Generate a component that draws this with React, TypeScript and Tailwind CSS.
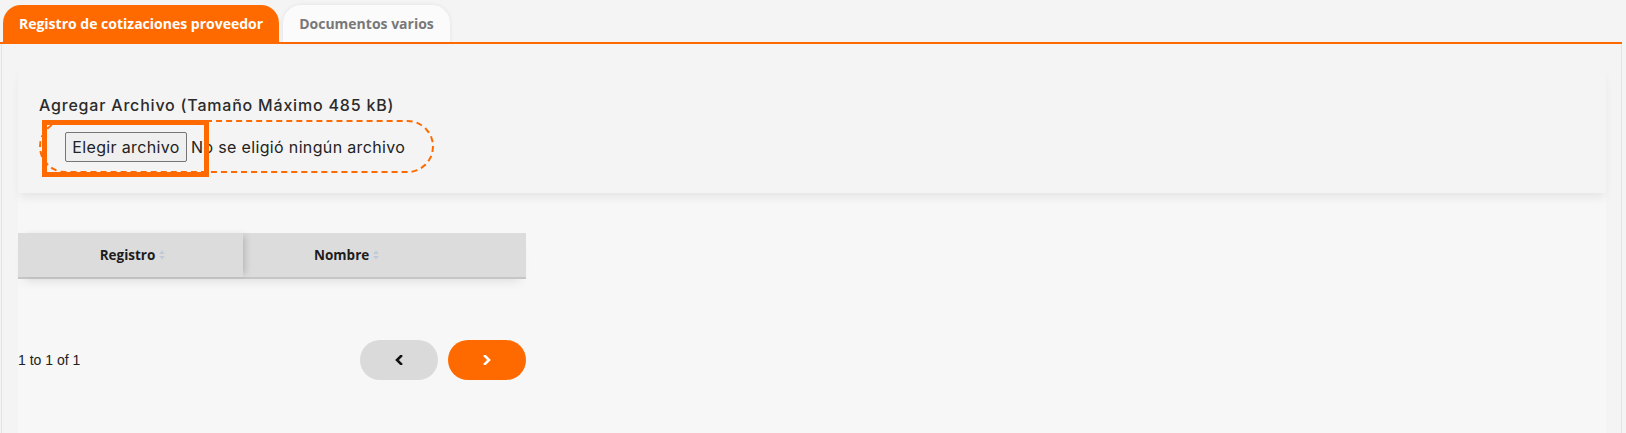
import React from 'react';

function SortIcon() {
  return (
    <svg width="6" height="10" viewBox="0 0 6 10" className="ml-[4px]">
      <path d="M3 0.5 L5.8 4 L0.2 4 Z" fill="#bfc9d8" />
      <path d="M3 9.5 L5.8 6 L0.2 6 Z" fill="#bfc9d8" />
    </svg>
  );
}

function Chevron({ dir, color }: { dir: 'left' | 'right'; color: string }) {
  const points = dir === 'left' ? '6,1 2,5 6,9' : '2,1 6,5 2,9';
  return (
    <svg width="8" height="10" viewBox="0 0 8 10">
      <polyline points={points} fill="none" stroke={color} strokeWidth="2.6" strokeLinecap="square" />
    </svg>
  );
}

export default function App() {
  return (
    <div className="min-h-[433px] w-full bg-[#f4f4f4]">
      <div className="w-[1622px]">
        {/* Tabs */}
        <div className="flex items-end gap-[4px] pl-[3px] pt-[5px] border-b-2 border-[#ff6a00] font-['Open_Sans',sans-serif]">
          <div className="w-[276px] h-[37px] rounded-t-[18px] bg-[#ff6a00] flex items-center justify-center text-white text-[14px] font-bold">
            Registro de cotizaciones proveedor
          </div>
          <div className="w-[167px] h-[37px] rounded-t-[18px] bg-[#fbfbfb] shadow-[0_0_4px_rgba(0,0,0,0.08)] flex items-center justify-center text-[#787878] text-[14px] font-bold">
            Documentos varios
          </div>
        </div>

        {/* Panel */}
        <div className="ml-[1px] border-x border-[#dde4ec] bg-[#f4f4f4] pl-[16px] pr-[15px] pt-[16px] min-h-[389px] flex flex-col">
          {/* Upload card */}
          <div className="relative z-10 h-[133px] rounded-t-[20px] bg-[#f4f4f4] shadow-[0_6px_10px_-2px_rgba(0,0,0,0.08)] pl-[21px] pt-[34px]">
            <p className="text-[16px] leading-[22px] font-medium text-[#2b2b2b] font-['Inter',sans-serif] tracking-[0.8px]">
              Agregar Archivo (Tamaño Máximo 485 kB)
            </p>
            <div className="relative mt-[4px] inline-flex items-center h-[53px] w-[395px] rounded-full border-2 border-dashed border-[#ff6a00] pl-[24px] font-['Inter',sans-serif] text-[16px] tracking-[0.35px] text-[#222]">
              <span className="h-[30px] w-[122px] flex items-center justify-center bg-[#efefef] border border-[#767676] rounded-[2px]">
                Elegir archivo
              </span>
              <span className="ml-[4px]">No se eligió ningún archivo</span>
              <div className="absolute left-[1px] -top-[2px] w-[167px] h-[57px] border-[5px] border-[#ff6a00]" />
            </div>
          </div>

          {/* Table section */}
          <div className="flex-1 bg-[#f7f7f7] pt-[40px]">
            <div className="w-[508px]">
              <div className="flex h-[46px] border-b-2 border-[#c6c6c6] bg-[#dcdcdc] shadow-[0_8px_10px_-6px_rgba(0,0,0,0.10)] font-['Open_Sans',sans-serif] text-[13.5px] font-bold text-[#1c1c1c]">
                <div className="relative z-10 w-[225px] flex items-center justify-center pl-[4px] bg-[#dcdcdc] shadow-[5px_0_7px_-3px_rgba(0,0,0,0.18)]">
                  Registro
                  <SortIcon />
                </div>
                <div className="flex-1 flex items-center pl-[71px]">
                  Nombre
                  <SortIcon />
                </div>
              </div>

              <div className="mt-[61px] flex items-center justify-between">
                <span className="font-['Liberation_Sans',Arial,sans-serif] text-[14px] text-[#222]">1 to 1 of 1</span>
                <div className="flex gap-[10px]">
                  <button className="w-[78px] h-[40px] rounded-full bg-[#dadada] flex items-center justify-center">
                    <Chevron dir="left" color="#111" />
                  </button>
                  <button className="w-[78px] h-[40px] rounded-full bg-[#ff6a00] flex items-center justify-center">
                    <Chevron dir="right" color="#fff" />
                  </button>
                </div>
              </div>
            </div>
          </div>
        </div>
      </div>
    </div>
  );
}
